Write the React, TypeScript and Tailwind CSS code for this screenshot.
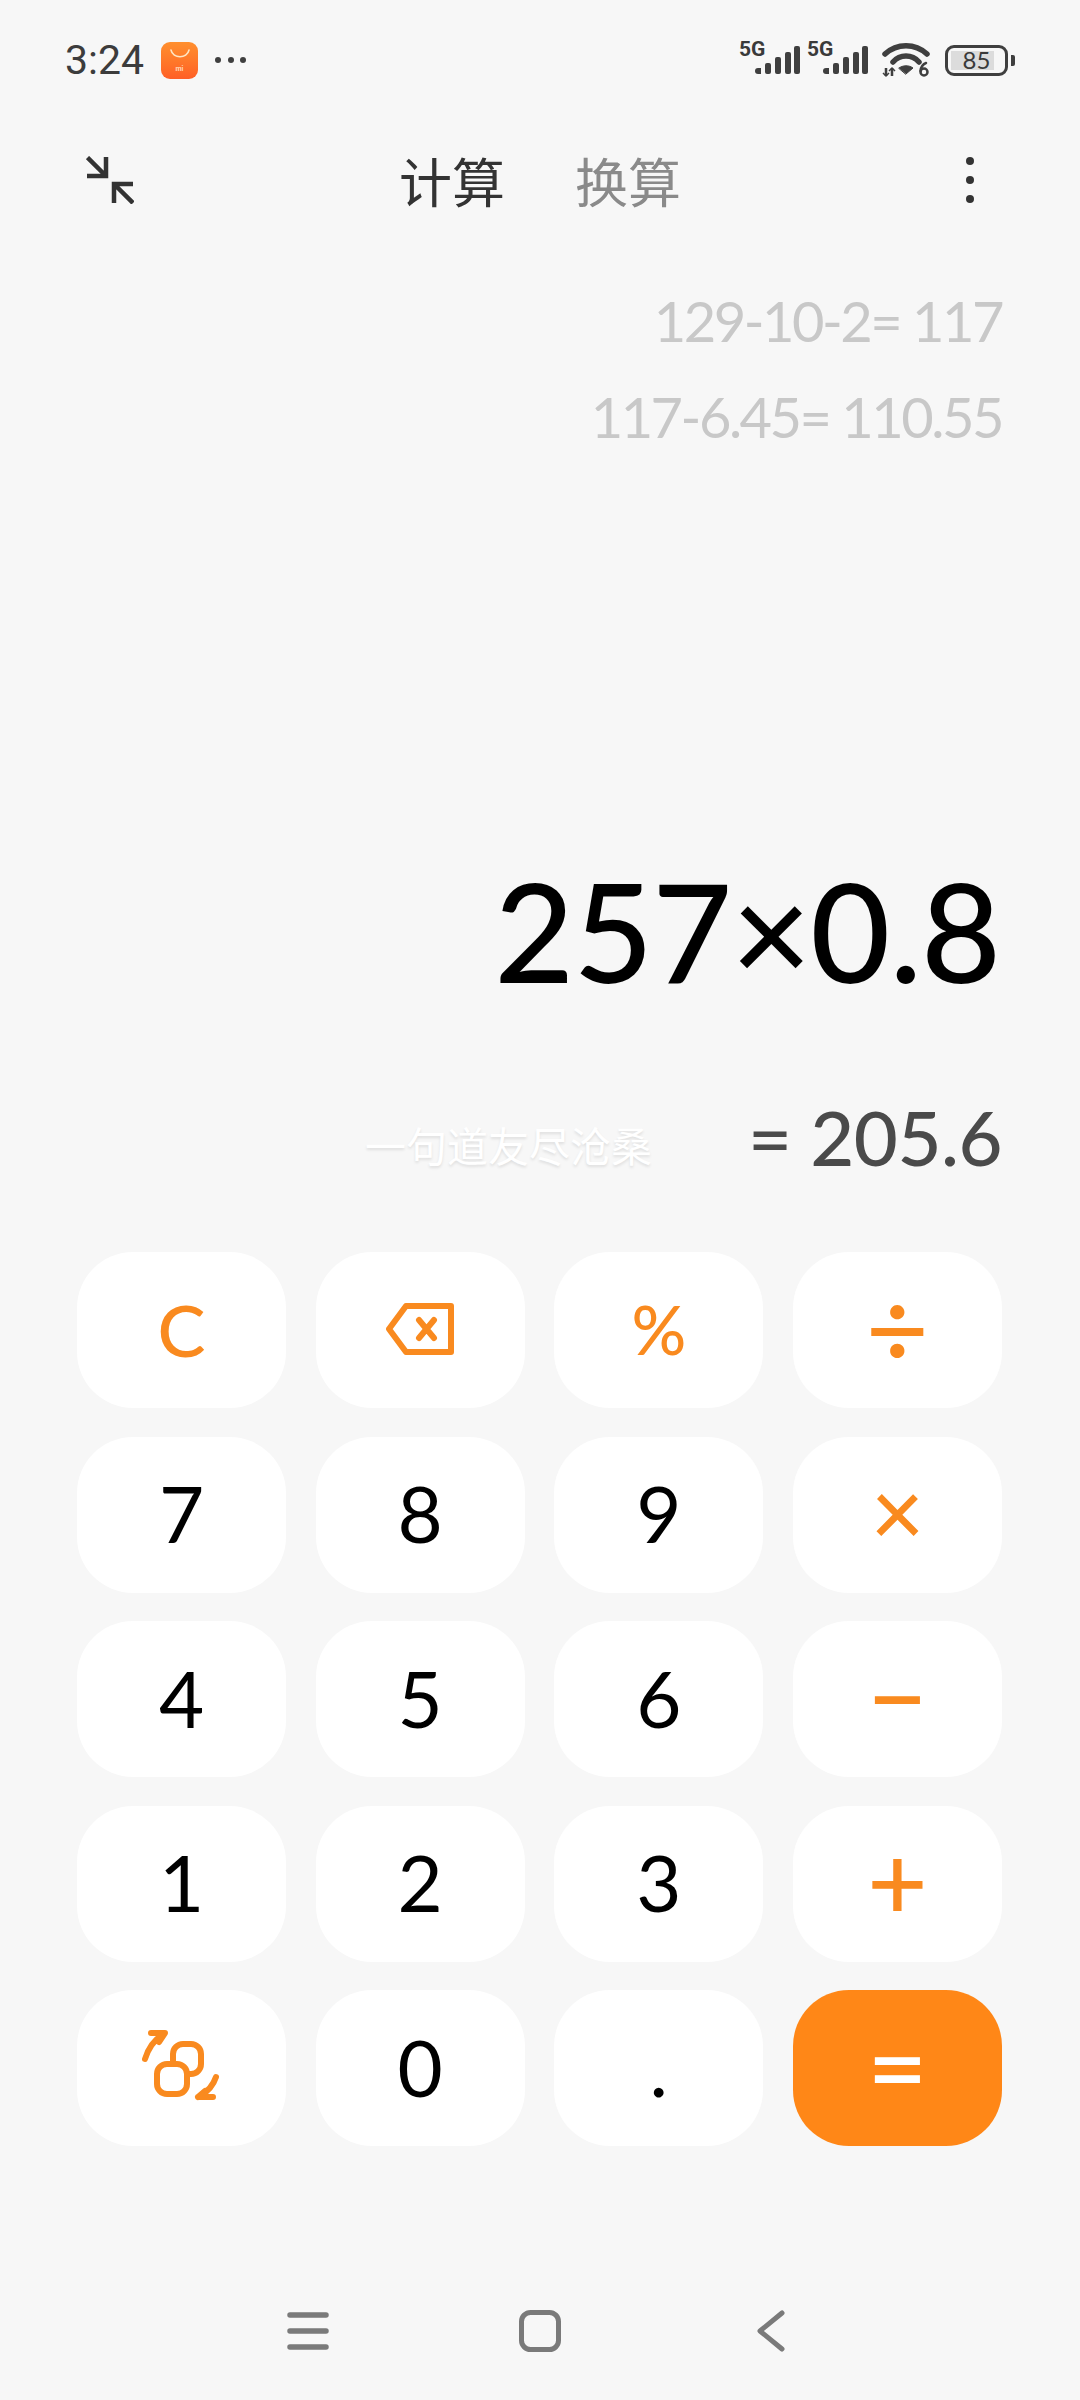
const FONT = "font-['Lato','Noto_Sans_CJK_SC',sans-serif]";

// status bar bits
const SignalIcon = () => (
  <div className="relative w-[62px] h-[36px]">
    <span className="absolute left-0 top-[-3px] text-[21px] leading-[20px] font-bold text-[#3a3a3a] font-['Roboto',sans-serif]">5G</span>
    <svg className="absolute left-0 top-0" width="62" height="36" viewBox="0 0 62 36" fill="#3f3f3f">
      <path d="M16 29a3 3 0 0 1 3-3h3v6h-3a3 3 0 0 1-3-3z" />
      <rect x="26" y="21" width="6" height="11" rx="2" />
      <rect x="36" y="15" width="6" height="17" rx="2" />
      <rect x="46" y="10" width="6" height="22" rx="2" />
      <rect x="55" y="4" width="6" height="28" rx="2" />
    </svg>
  </div>
);

const WifiIcon = () => (
  <svg width="48" height="36" viewBox="0 0 48 36" fill="none" stroke="#3f3f3f" strokeWidth="5.5" strokeLinecap="round">
    <path d="M3 12C15 1 33 1 45 12" />
    <path d="M11 20C18 12 30 12 37 20" />
    <path d="M17 26c4-3 10-3 14 0l-7 6z" fill="#3f3f3f" strokeWidth="1" />
    <path d="M4 26v8M10 26v8" strokeWidth="2.5" strokeLinecap="butt" />
    <path d="M1 31l3 3 3-3M7 29l3-3 3 3" strokeWidth="1.5" strokeLinecap="butt" />
    <circle cx="42" cy="30" r="3.5" strokeWidth="2.5" />
    <path d="M44 21c-3 1-5 4-5.500 8" strokeWidth="2.5" />
  </svg>
);

const Battery = () => (
  <div className="flex items-center gap-[3px]">
    <div className="relative w-[63px] h-[31px] rounded-[9px] border-[3px] border-[#3f3f3f] p-[3px]">
      <div className="h-full w-[43px] bg-[#dcdcdc]" />
      <span className={`absolute inset-0 flex items-center justify-center text-[24px] leading-none text-[#3a3a3a] ${FONT}`}>85</span>
    </div>
    <div className="w-[4px] h-[11px] rounded-r-[2px] bg-[#3f3f3f]" />
  </div>
);

const MiStoreIcon = () => (
  <div className="w-[37px] h-[37px] rounded-[9px] bg-gradient-to-b from-[#ff8f2e] to-[#ff5f26] flex flex-col items-center">
    <svg width="22" height="14" viewBox="0 0 22 14" fill="none" stroke="#ffe6c4" strokeWidth="1.6" strokeLinecap="round" className="mt-[6px]">
      <path d="M2 2c2 9 16 9 18 0" />
    </svg>
    <span className="text-[7px] leading-[8px] mt-[3px] font-bold text-[#ffd9b8] font-['Roboto',sans-serif]">mi</span>
  </div>
);

// toolbar collapse icon
const CollapseIcon = () => (
  <svg width="48" height="48" viewBox="0 0 48 48" fill="none" stroke="#333333" strokeWidth="4.5">
    <path d="M1.500 1.500L20 20M20 1V20H1" />
    <path d="M47 47L28 28M28 47V28H47" />
  </svg>
);

const BackspaceIcon = () => (
  <svg width="68" height="52" viewBox="0 0 68 52" fill="none" stroke="#f98a1f" strokeWidth="6" strokeLinejoin="round" strokeLinecap="round">
    <path d="M20 3h45v46H20L3 26z" />
    <path d="M33 17l15 18M48 17L33 35" />
  </svg>
);

const SwitchIcon = () => (
  <svg width="80" height="76" viewBox="0 0 80 76" fill="none" stroke="#f98a1f" strokeWidth="6" strokeLinecap="round" strokeLinejoin="round">
    <rect x="31" y="15" width="28" height="30" rx="10" />
    <rect x="15" y="35" width="30" height="30" rx="10" fill="#ffffff" />
    <path d="M3 30C6 20 11 12 20 6M9 4l14 0-6 9" />
    <path d="M74 48c-3 9-9 15-16 19M56 68h15M56 68l7-6" />
  </svg>
);

const NavIcons = () => (
  <div className="flex items-center justify-center gap-[190px] h-[42px] pr-[8px]">
    <svg width="42" height="40" viewBox="0 0 42 40" fill="none" stroke="#7a7a7a" strokeWidth="5.5" strokeLinecap="round">
      <path d="M3 4h36M3 20h36M3 36h36" />
    </svg>
    <svg width="42" height="42" viewBox="0 0 42 42" fill="none" stroke="#7a7a7a" strokeWidth="5">
      <rect x="2.500" y="2.500" width="37" height="37" rx="9" />
    </svg>
    <svg width="28" height="42" viewBox="0 0 28 42" fill="none" stroke="#7a7a7a" strokeWidth="5" strokeLinecap="round" strokeLinejoin="round" className="ml-[6px]">
      <path d="M25 3L3 21l22 18" />
    </svg>
  </div>
);

const Key = ({ children, tone = "num", className = "text-[78px] pb-[3px]" }: any) => {
  const tones: any = {
    num: "bg-white text-black",
    op: "bg-white text-[#f98a1f]",
    eq: "bg-[#ff8717] text-white",
  };
  return (
    <button className={`h-[156px] rounded-[56px] flex items-center justify-center leading-none ${tones[tone]} ${className}`}>
      {children}
    </button>
  );
};

export default function App() {
  return (
    <div className={`w-[1080px] h-[2400px] bg-[#f7f7f7] flex flex-col overflow-hidden ${FONT}`}>
      {/* status bar */}
      <div className="h-[120px] pl-[65px] pr-[65px] flex items-center justify-between shrink-0">
        <div className="flex items-center">
          <span className="text-[41px] leading-none font-['Roboto',sans-serif] text-[#3c3c3c] w-[96px]">3:24</span>
          <MiStoreIcon />
          <div className="flex gap-[6.500px] ml-[17px]">
            <span className="w-[6px] h-[6px] rounded-full bg-[#3f3f3f]" />
            <span className="w-[6px] h-[6px] rounded-full bg-[#3f3f3f]" />
            <span className="w-[6px] h-[6px] rounded-full bg-[#3f3f3f]" />
          </div>
        </div>
        <div className="flex items-center gap-[6px]">
          <SignalIcon />
          <SignalIcon />
          <div className="ml-[7px] mr-[9px]"><WifiIcon /></div>
          <Battery />
        </div>
      </div>

      {/* toolbar */}
      <div className="h-[120px] shrink-0 px-[86px] grid grid-cols-[1fr_auto_1fr] items-center">
        <CollapseIcon />
        <div className="flex gap-[70px] text-[53px] leading-none font-['Noto_Sans_CJK_SC',sans-serif]">
          <span className="text-[#333333]">计算</span>
          <span className="text-[#8a8a8a]">换算</span>
        </div>
        <div className="flex flex-col gap-[11px] justify-self-end mr-[20px]">
          <span className="w-[8px] h-[8px] rounded-full bg-[#333333]" />
          <span className="w-[8px] h-[8px] rounded-full bg-[#333333]" />
          <span className="w-[8px] h-[8px] rounded-full bg-[#333333]" />
        </div>
      </div>

      {/* history */}
      <div className="shrink-0 pr-[78px] pt-[33px] flex flex-col items-end text-[56px] leading-[96px] tracking-[-2.500px] text-[#c8c8c8] h-[615px]">
        <div>129-10-2= 117</div>
        <div>117-6.45= 110.55</div>
      </div>

      {/* expression + result */}
      <div className="shrink-0 pr-[80px] mb-[32px] text-right text-[138px] leading-[150px] font-medium tracking-[-1px] text-black h-[150px]">257×0.8</div>
      <div className="shrink-0 h-[160px] pr-[78px] pt-[40px] flex items-center justify-end">
        <span className="text-[41px] leading-none text-white mr-[96px] mt-[15px] font-['Noto_Sans_CJK_SC',sans-serif] [text-shadow:0_2px_3px_rgba(0,0,0,0.1)]">一句道友尽沧桑</span>
        <span className="text-[76px] leading-none font-medium tracking-[-0.500px] text-[#4a4a4a]">= 205.6</span>
      </div>

      {/* keypad */}
      <div className="shrink-0 mt-[55px] pl-[77px] pr-[78px] grid grid-cols-4 gap-x-[29.500px] gap-y-[28.500px]">
        <Key tone="op" className="text-[72px] font-medium pb-[3px]">C</Key>
        <Key tone="op"><BackspaceIcon /></Key>
        <Key tone="op" className="text-[68px] font-medium pb-[3px]">%</Key>
        <Key tone="op" className="text-[108px] font-medium pb-[8px]">÷</Key>
        <Key>7</Key>
        <Key>8</Key>
        <Key>9</Key>
        <Key tone="op" className="text-[92px] font-medium pb-[8px]">×</Key>
        <Key>4</Key>
        <Key>5</Key>
        <Key>6</Key>
        <Key tone="op" className="text-[104px] font-medium pb-[8px]">−</Key>
        <Key>1</Key>
        <Key>2</Key>
        <Key>3</Key>
        <Key tone="op" className="text-[104px] font-medium pb-[8px]">+</Key>
        <Key tone="op"><SwitchIcon /></Key>
        <Key>0</Key>
        <Key>.</Key>
        <Key tone="eq" className="text-[104px] font-medium pb-[6px]">=</Key>
      </div>

      <div className="mt-[164px]">
        <NavIcons />
      </div>
    </div>
  );
}
